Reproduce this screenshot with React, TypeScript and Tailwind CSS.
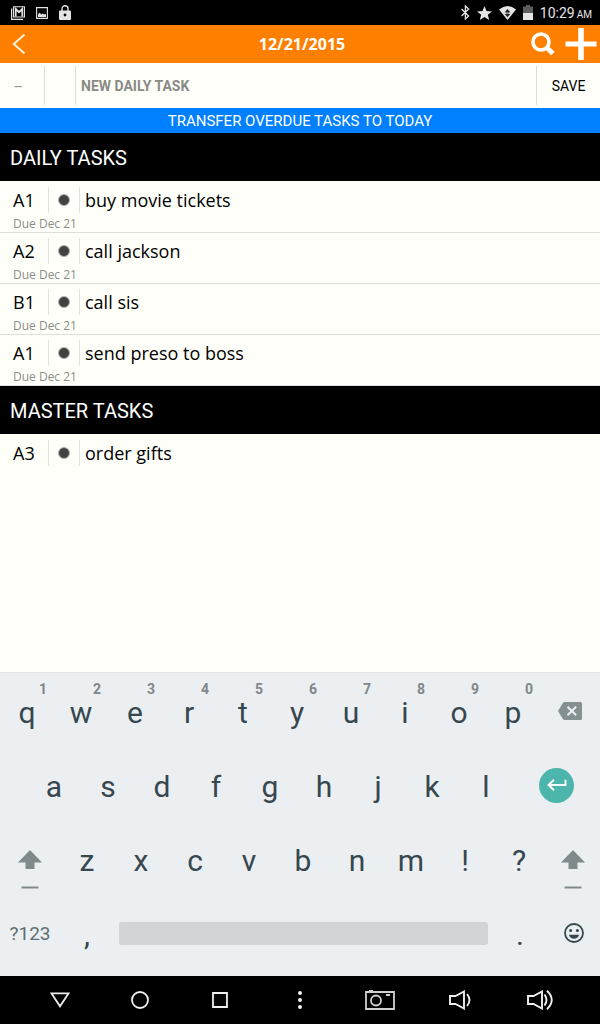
import { useState } from 'react';
import type { ReactNode } from 'react';

type Task = {
  id: number;
  priority: string;
  title: string;
  due?: string;
};

const dailyTasks: Task[] = [
  { id: 1, priority: 'A1', title: 'buy movie tickets', due: 'Due Dec 21' },
  { id: 2, priority: 'A2', title: 'call jackson', due: 'Due Dec 21' },
  { id: 3, priority: 'B1', title: 'call sis', due: 'Due Dec 21' },
  { id: 4, priority: 'A1', title: 'send preso to boss', due: 'Due Dec 21' },
];

const masterTasks: Task[] = [{ id: 5, priority: 'A3', title: 'order gifts' }];

const topRow = ['q', 'w', 'e', 'r', 't', 'y', 'u', 'i', 'o', 'p'];
const middleRow = ['a', 's', 'd', 'f', 'g', 'h', 'j', 'k', 'l'];
const bottomRow = ['z', 'x', 'c', 'v', 'b', 'n', 'm', '!', '?'];

function StatusBar() {
  return (
    <div className="flex h-[25px] items-center justify-between bg-black pr-2 pl-[11px] text-[#e4e4e4]">
      <div className="flex items-center gap-[11px]">
        {/* mail */}
        <svg className="h-[14px] w-[14px]" viewBox="0 0 14 14" fill="none" stroke="currentColor">
          <path d="M.6 2.500v10.800H12" strokeWidth="1.200" />
          <path d="M2.500.8h11v10.200h-11z" strokeWidth="1.100" />
          <path d="M4.700 10.500V3L8 6.200 11.300 3v7.500" strokeWidth="1.800" />
        </svg>
        {/* picture */}
        <svg className="h-[12px] w-[12px]" viewBox="0 0 12 12">
          <path d="M.6.6h10.800v10.800H.6z" fill="none" stroke="currentColor" strokeWidth="1.100" />
          <path d="M2 10V7.300l1.600-1.500L5.500 7.500l1.300-.9L8 7.400l2-.4v3z" fill="currentColor" />
        </svg>
        {/* lock */}
        <svg className="h-[15px] w-[12px]" viewBox="0 0 12 15">
          <path d="M3 6V3.800a3 3 0 016 0V6" fill="none" stroke="currentColor" strokeWidth="1.400" />
          <path fillRule="evenodd" d="M1.200 5.500h9.600q1.200 0 1.200 1.200v7q0 1.300-1.200 1.300H1.200Q0 15 0 13.700v-7q0-1.200 1.200-1.200zM6 8.600a1.400 1.400 0 100 2.800 1.400 1.400 0 000-2.800z" fill="currentColor" />
        </svg>
      </div>
      <div className="flex items-center gap-[7px]">
        {/* bluetooth */}
        <svg className="h-[15px] w-[9px]" viewBox="0 0 9 15" fill="none" stroke="currentColor" strokeWidth="1.300">
          <path d="M.6 4l7 7-3.200 3V1l3.200 3-7 7" />
        </svg>
        <svg className="h-[14px] w-[15px]" viewBox="0 0 15 14" fill="currentColor">
          <path d="M7.500 0l2 5 5.500.4-4.200 3.400 1.400 5.200-4.700-2.900L2.800 14l1.400-5.200L0 5.400 5.500 5z" />
        </svg>
        {/* wifi */}
        <svg className="h-[14px] w-[17px]" viewBox="0 0 17 14">
          <path d="M0 3.600Q8.500-3.400 17 3.600L8.500 14z" fill="currentColor" />
          <path d="M8.500 3l3 3.500H10v1.200h1.500l-3 3.500-3-3.500H7V6.500H5.500z" fill="#222" />
          <path d="M5.500 7.100h6" stroke="#e4e4e4" strokeWidth="1" />
        </svg>
        {/* battery */}
        <svg className="h-[15px] w-[10px]" viewBox="0 0 10 15">
          <path d="M3 0h4v1.500h3V8H0V1.500h3z" fill="#5c5c5c" />
          <path d="M0 8h10v7H0z" fill="currentColor" />
        </svg>
        <div className="flex items-baseline gap-[2px] leading-none">
          <span className="text-[14px]">10:29</span>
          <span className="text-[10px]">AM</span>
        </div>
      </div>
    </div>
  );
}

function Header() {
  return (
    <header className="grid h-[38px] grid-cols-[1fr_auto_1fr] items-center bg-[#ff7f00] text-white">
      <button aria-label="Back" className="ml-3 w-fit">
        <svg className="h-5 w-[14px]" viewBox="0 0 14 20" fill="none" stroke="#fff4e0" strokeWidth="2">
          <path d="M12.500.6L1.800 10l10.700 9.400" />
        </svg>
      </button>
      <h1 className="pl-1 font-['Open_Sans','Noto_Sans',sans-serif] text-base font-bold">12/21/2015</h1>
      <div className="flex items-center justify-end gap-[10px] pr-[3px]">
        <button aria-label="Search">
          <svg className="h-6 w-6" viewBox="0 0 24 24" fill="none" stroke="currentColor">
            <circle cx="10" cy="10" r="8" strokeWidth="3.600" />
            <path d="M15.500 15.500l6.500 6" strokeWidth="5" />
          </svg>
        </button>
        <button aria-label="Add task">
          <svg className="h-8 w-8" viewBox="0 0 32 32" fill="currentColor">
            <path d="M13.200 0h5.600v13.500H31.500v5H18.800V32h-5.600V18.500H.5v-5h12.700z" />
          </svg>
        </button>
      </div>
    </header>
  );
}

function NewTaskForm() {
  const [title, setTitle] = useState('');

  return (
    <form className="flex h-[45px] py-[3px]" onSubmit={(e) => e.preventDefault()}>
      <button type="button" aria-label="Priority" className="w-[45px] border-r border-[#dcdcd8] pr-2 text-sm text-[#8a8a88]">
        --
      </button>
      <button type="button" aria-label="Status" className="w-[31px] border-r border-[#dcdcd8]" />
      <input
        aria-label="New daily task"
        placeholder="NEW DAILY TASK"
        value={title}
        onChange={(e) => setTitle(e.target.value)}
        className="min-w-0 flex-1 pl-[5px] text-sm font-bold outline-none placeholder:text-[#8a8a86]"
      />
      <button type="submit" className="w-16 border-l border-[#dcdcd8] text-sm">
        SAVE
      </button>
    </form>
  );
}

function TaskSection({ heading, tasks }: { heading: string; tasks: Task[] }) {
  return (
    <section>
      <h2 className="flex h-12 items-center bg-black px-[10px] pt-[2px] text-xl text-white">{heading}</h2>
      <ul className="pt-px font-['Open_Sans','Noto_Sans',sans-serif]">
        {tasks.map((task) => (
          <li key={task.id} className={task.due ? 'h-[51px] border-b border-[#dededa] pt-[5px]' : 'pt-[5px]'}>
            <div className="flex h-[26px] items-stretch text-lg leading-[26px]">
              <span className="w-12 pl-[13px]">{task.priority}</span>
              <button
                aria-label={`Status of ${task.title}`}
                className="flex w-8 items-center justify-center border-x border-[#e2e2de]"
              >
                <span className="h-3 w-3 rounded-full border border-[#b4b4b0] bg-[#424242]" />
              </button>
              <span className="pl-[5px]">{task.title}</span>
            </div>
            {task.due && <p className="pt-px pl-[13px] text-xs leading-5 text-[#8c8c88]">{task.due}</p>}
          </li>
        ))}
      </ul>
    </section>
  );
}

function Key({ label, hint }: { label: string; hint?: string }) {
  return (
    <button className="relative flex h-full items-center justify-center pt-1 text-[30px] leading-9">
      {label}
      {hint && (
        <span className="absolute top-[7px] left-1/2 ml-3 text-sm leading-4 font-bold text-[#80868a]">{hint}</span>
      )}
    </button>
  );
}

function IconKey({ label, children }: { label: string; children: ReactNode }) {
  return (
    <button aria-label={label} className="flex h-full items-center justify-center">
      {children}
    </button>
  );
}

function ShiftIcon() {
  return (
    <svg className="h-[39px] w-6 text-[#7e8a8c]" viewBox="0 0 24 39" fill="currentColor">
      <path d="M12 0l12 12.500h-7.500V19h-9v-6.500H0z" />
      <path d="M3.500 36.500h17v2h-17z" />
    </svg>
  );
}

function Keyboard() {
  return (
    <div className="border-t border-[#e2e4e3] bg-[#eceff1] pb-[6px] text-[#37474f]">
      <div className="grid h-[75px] grid-cols-[repeat(10,54fr)_60fr] pt-px">
        {topRow.map((k, i) => (
          <Key key={k} label={k} hint={String((i + 1) % 10)} />
        ))}
        <IconKey label="Backspace">
          <svg className="h-[18px] w-6" viewBox="0 0 24 18">
            <path d="M6.500 0H22.500Q24 0 24 1.500v15q0 1.500-1.500 1.500H6.500Q5.600 18 5 17.200L0 9 5 .8Q5.600 0 6.500 0z" fill="#859092" />
            <path d="M9.500 4.700l8.600 8.600M18.100 4.700l-8.600 8.600" stroke="#eceff1" strokeWidth="2" />
          </svg>
        </IconKey>
      </div>
      <div className="grid h-[74px] grid-cols-[27fr_repeat(9,54fr)_87fr]">
        <span />
        {middleRow.map((k) => (
          <Key key={k} label={k} />
        ))}
        <IconKey label="Enter">
          <span className="flex h-[35px] w-[35px] items-center justify-center rounded-full bg-[#4db6ac] text-white">
            <svg className="h-3 w-5" viewBox="0 0 20 12" fill="none" stroke="currentColor" strokeWidth="1.900">
              <path d="M18.500.8v5.200H2M7 .7L1.500 6 7 11.300" />
            </svg>
          </span>
        </IconKey>
      </div>
      <div className="grid h-[74px] grid-cols-[60fr_repeat(9,54fr)_54fr]">
        <IconKey label="Shift">
          <span className="pt-5">
            <ShiftIcon />
          </span>
        </IconKey>
        {bottomRow.map((k) => (
          <Key key={k} label={k} />
        ))}
        <IconKey label="Right shift">
          <span className="pt-5">
            <ShiftIcon />
          </span>
        </IconKey>
      </div>
      <div className="grid h-[74px] grid-cols-[60fr_54fr_379fr_54fr_53fr]">
        <button className="pt-[3px] text-[19px] text-[#5f6d72]">?123</button>
        <Key label="," />
        <button aria-label="Space" className="mx-[5px] h-[23px] self-center rounded-[3px] bg-[#d1d5d7]" />
        <Key label="." />
        <IconKey label="Emoji">
          <svg className="h-5 w-5" viewBox="0 0 20 20">
            <circle cx="10" cy="10" r="9" fill="none" stroke="currentColor" strokeWidth="1.800" />
            <circle cx="6.600" cy="7.500" r="1.500" fill="currentColor" />
            <circle cx="13.400" cy="7.500" r="1.500" fill="currentColor" />
            <path d="M4.800 11.700h10.400q-1.400 4-5.200 4t-5.200-4z" fill="currentColor" />
          </svg>
        </IconKey>
      </div>
    </div>
  );
}

function NavBar() {
  return (
    <nav className="grid h-12 grid-cols-7 items-center justify-items-center bg-black px-5 text-[#eeeeee]">
      <button aria-label="Back">
        <svg className="h-4 w-5" viewBox="0 0 20 16" fill="none" stroke="currentColor" strokeWidth="1.800">
          <path d="M1.500 1.400h17L10 14.300z" />
        </svg>
      </button>
      <button aria-label="Home">
        <svg className="h-[18px] w-[18px]" viewBox="0 0 18 18" fill="none" stroke="currentColor" strokeWidth="1.800">
          <circle cx="9" cy="9" r="8" />
        </svg>
      </button>
      <button aria-label="Recent apps">
        <svg className="h-4 w-4" viewBox="0 0 16 16" fill="none" stroke="currentColor" strokeWidth="1.800">
          <path d="M1 1h14v14H1z" />
        </svg>
      </button>
      <button aria-label="Menu">
        <svg className="h-[18px] w-1" viewBox="0 0 4 18" fill="currentColor">
          <circle cx="2" cy="2" r="2" />
          <circle cx="2" cy="9" r="2" />
          <circle cx="2" cy="16" r="2" />
        </svg>
      </button>
      <button aria-label="Screenshot">
        <svg className="h-5 w-[30px]" viewBox="0 0 30 20" fill="none" stroke="#d0d0d0">
          <path d="M1 2h28v17H1z" strokeWidth="1.800" />
          <path d="M4 .6h4" strokeWidth="1.200" />
          <circle cx="11" cy="10.500" r="5" strokeWidth="1.800" />
          <path d="M21 5h4" strokeWidth="2" />
        </svg>
      </button>
      <button aria-label="Volume down">
        <svg className="h-5 w-[22px]" viewBox="0 0 22 20" fill="none" stroke="currentColor" strokeWidth="1.900">
          <path d="M1 6h5.500L15 1.500v17L6.500 14H1z" />
          <path d="M18 4q5 6 0 12" />
        </svg>
      </button>
      <button aria-label="Volume up">
        <svg className="h-5 w-[26px]" viewBox="0 0 26 20" fill="none" stroke="currentColor" strokeWidth="1.900">
          <path d="M1 6h5.500L15 1.500v17L6.500 14H1z" />
          <path d="M17.500 4.500q4 5.500 0 11M20 .8q9.500 9.200 0 18.400" />
        </svg>
      </button>
    </nav>
  );
}

export default function App() {
  return (
    <div className="flex min-h-screen flex-col bg-[#fffffa] font-[Roboto,sans-serif] text-black">
      <StatusBar />
      <Header />
      <main className="flex-1">
        <NewTaskForm />
        <button className="block h-[25px] w-full bg-[#007fff] pt-px text-[15px] text-white">
          TRANSFER OVERDUE TASKS TO TODAY
        </button>
        <TaskSection heading="DAILY TASKS" tasks={dailyTasks} />
        <TaskSection heading="MASTER TASKS" tasks={masterTasks} />
      </main>
      <Keyboard />
      <NavBar />
    </div>
  );
}
